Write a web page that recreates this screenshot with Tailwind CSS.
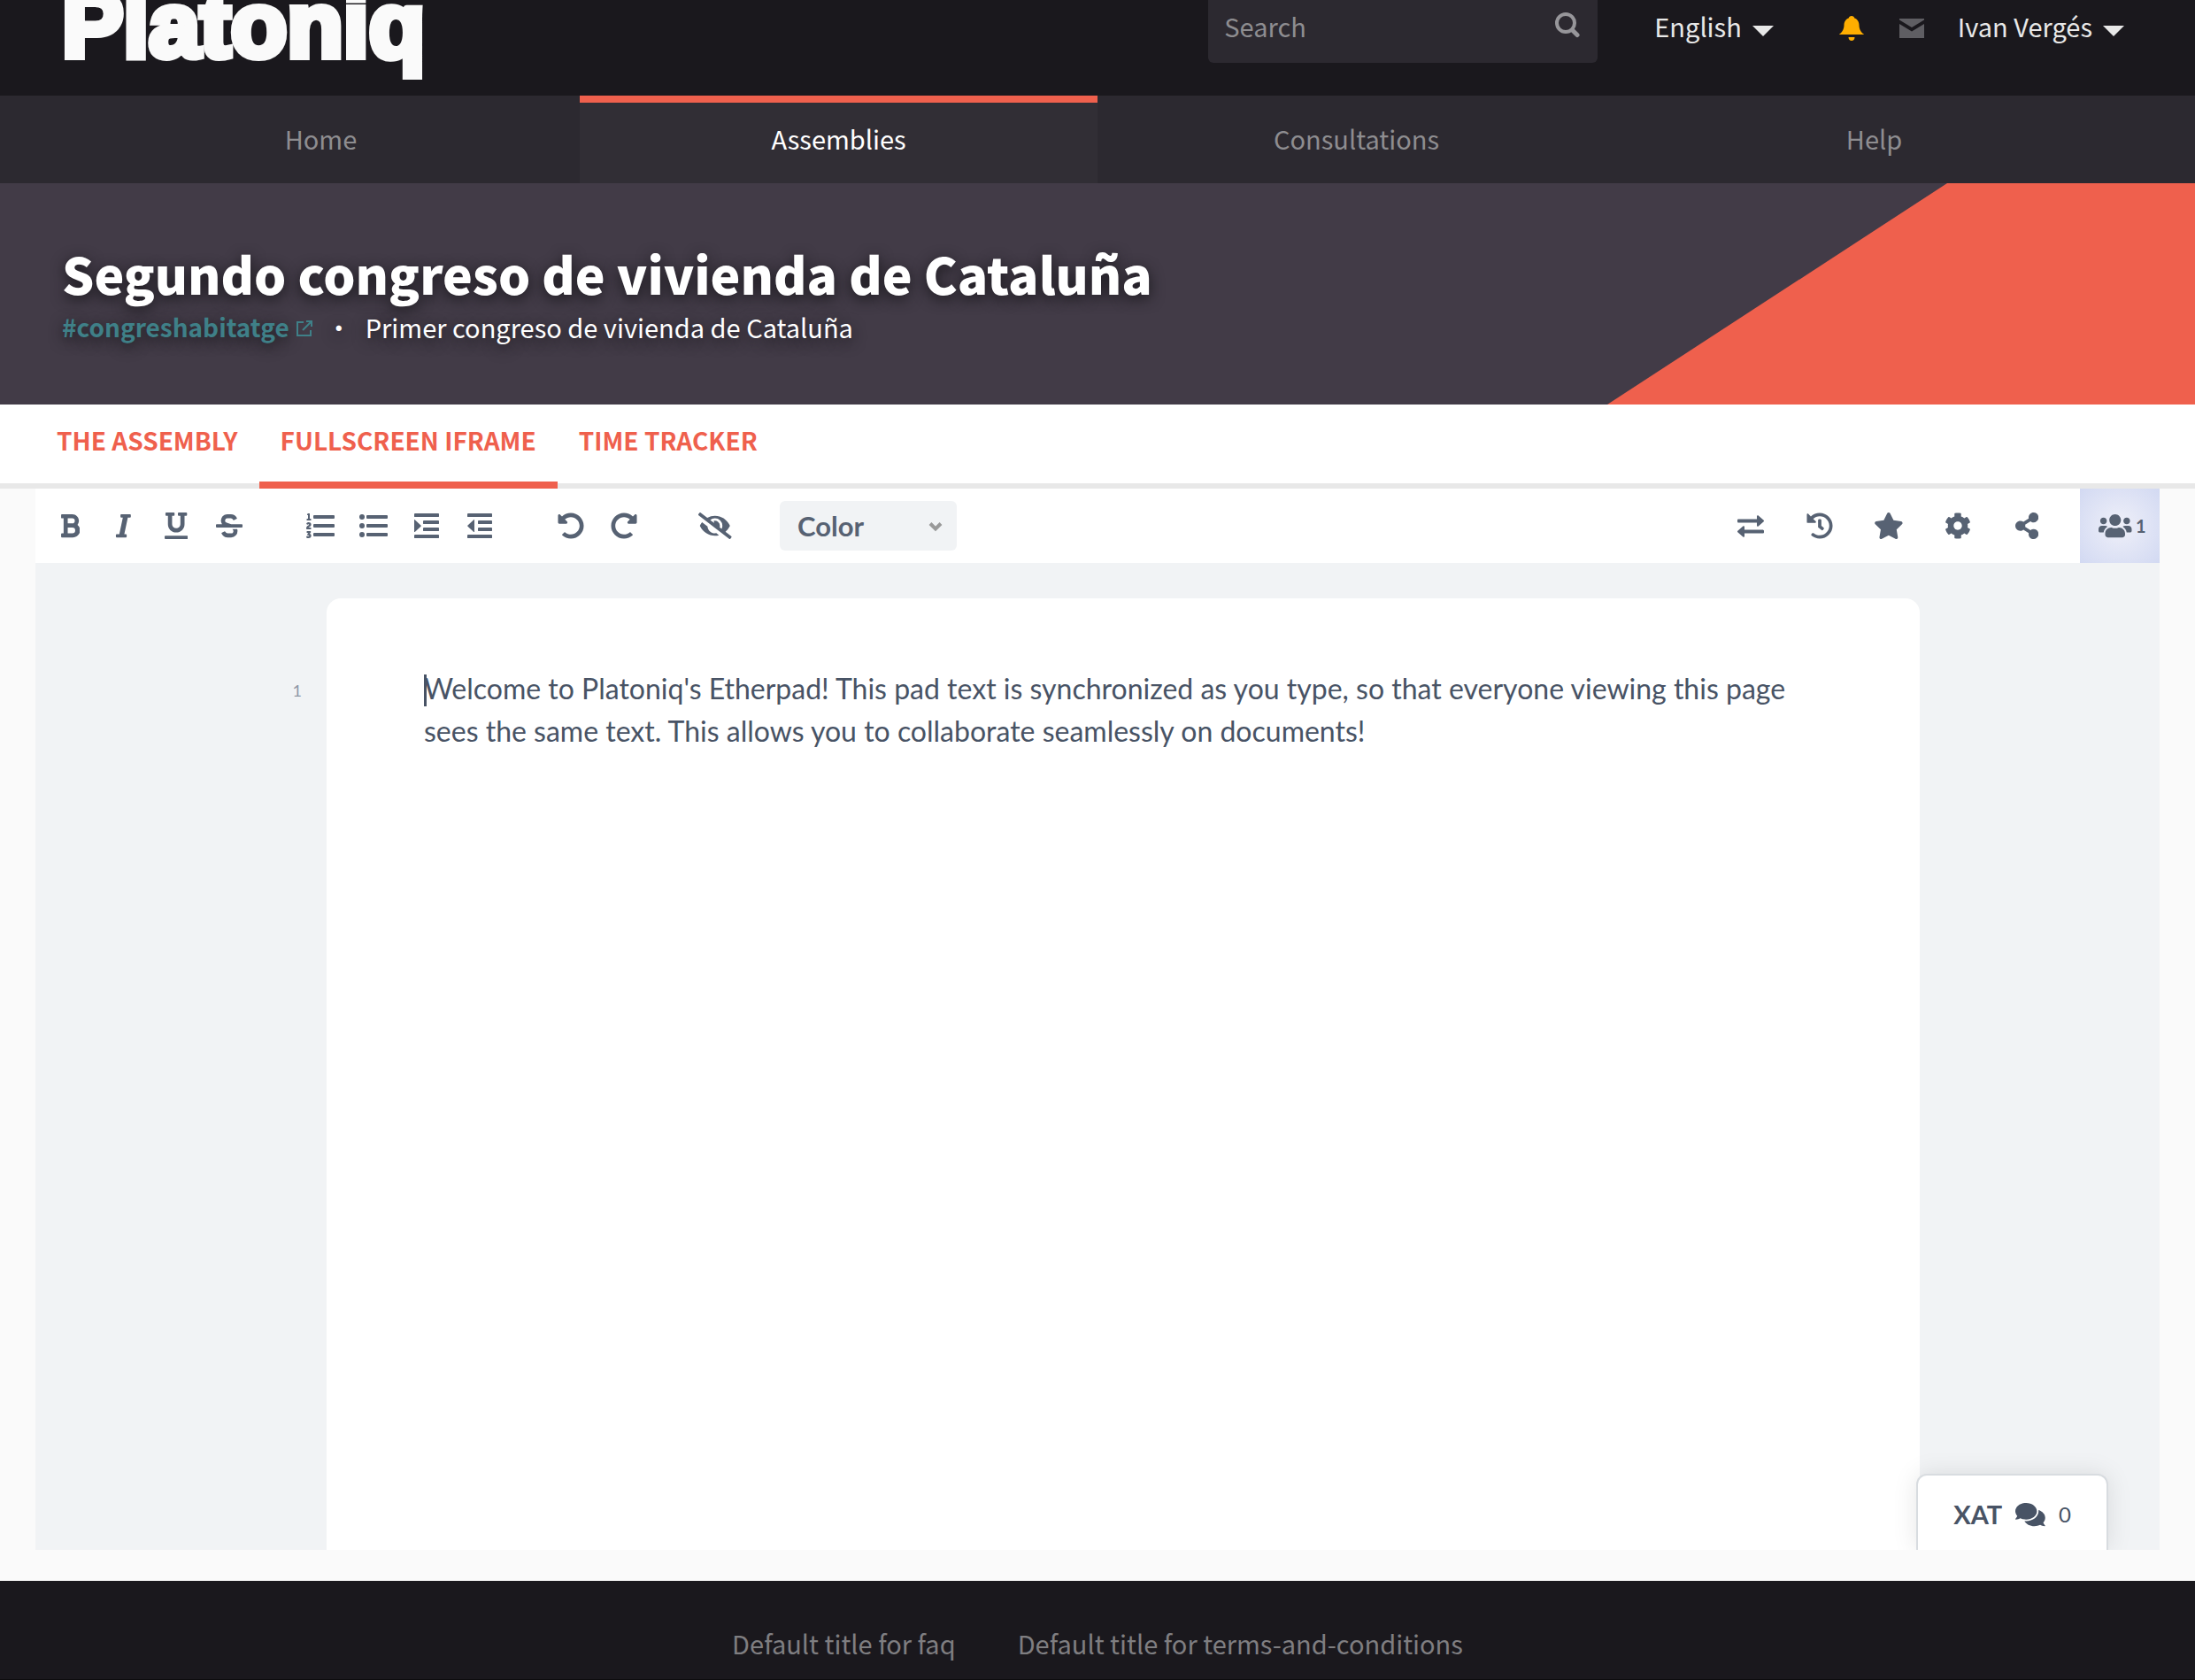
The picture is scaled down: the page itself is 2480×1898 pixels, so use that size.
<!DOCTYPE html>
<html lang="en">
<head>
<meta charset="utf-8">
<meta name="viewport" content="width=device-width, initial-scale=1">
<title>Segundo congreso de vivienda de Cataluña</title>
<script src="https://cdn.jsdelivr.net/npm/@tailwindcss/browser@4"></script>
</head>
<body class="flex min-h-screen flex-col bg-[#fafafa] font-['Noto_Sans_CJK_SC',sans-serif] text-[29px] leading-12">

<header class="flex h-[108px] items-start justify-between overflow-hidden bg-[#1a181d] pr-20 pl-[70px]">
  <a href="#" class="-mt-6 font-['Liberation_Sans',sans-serif] text-[104px] leading-none font-bold text-[#fafafa] [-webkit-text-stroke:8px_#fafafa]">Platoniq</a>
  <div class="flex h-[71px] items-center text-[#e8e8e8]">
    <form class="flex h-full w-[440px] items-center rounded-b-md bg-[#2c2930] px-[18px] pb-3.5">
      <input type="search" aria-label="Search" placeholder="Search" class="h-12 min-w-0 flex-1 bg-transparent outline-none placeholder:text-[#8e8d90]">
      <button type="button" aria-label="Submit search" class="text-[#97969a]">
        <svg class="size-8" viewBox="0 0 32 32" fill="none" stroke="currentColor"><circle cx="14" cy="13" r="10" stroke-width="4"/><path d="M21.500 21l5.500 5.500" stroke-width="5" stroke-linecap="round"/></svg>
      </button>
    </form>
    <button type="button" class="ml-16 flex items-center gap-3 pb-3.5">English
      <svg class="mt-3 h-3 w-6" viewBox="0 0 24 12" fill="currentColor"><path d="M0 0h24L12 12z"/></svg>
    </button>
    <a href="#" aria-label="Notifications" class="ml-[74px] pb-2 text-[#ffae00]">
      <svg class="size-7" viewBox="0 0 28 28" fill="currentColor"><path d="M14 0c-1.800 0-3 1.200-3.300 2.600C7 4 5.600 7 5.500 10.500 5.300 16 3 18.500 0 20.800V21h28v-.200C25 18.500 22.700 16 22.500 10.500 22.400 7 21 4 17.300 2.600 17 1.200 15.800 0 14 0zM10.500 24h7c0 2.400-1.500 4-3.500 4s-3.500-1.600-3.500-4z"/></svg>
    </a>
    <a href="#" aria-label="Conversations" class="ml-10 pb-2 text-[#5f5e63]">
      <svg class="h-[22px] w-7" viewBox="0 0 28 22" fill="currentColor"><path d="M0 0h28v1.500L14 10 0 1.500zM0 6l14 8.500L28 6v16H0z"/></svg>
    </a>
    <button type="button" class="ml-[38px] flex items-center gap-3 pb-3.5">Ivan Vergés
      <svg class="mt-3 h-3 w-6" viewBox="0 0 24 12" fill="currentColor"><path d="M0 0h24L12 12z"/></svg>
    </button>
  </div>
</header>

<nav aria-label="Main" class="grid h-[99px] grid-cols-4 bg-[#2c2930] px-[70px] text-[#8e8d90]">
  <a href="#" class="flex items-center justify-center pb-1">Home</a>
  <a href="#" aria-current="page" class="flex items-center justify-center border-t-8 border-[#ef604d] bg-[#312e35] pb-3 text-white">Assemblies</a>
  <a href="#" class="flex items-center justify-center pb-1">Consultations</a>
  <a href="#" class="flex items-center justify-center pb-1">Help</a>
</nav>

<section class="relative bg-[#423b47] px-[70px] py-16 text-white">
  <div class="absolute inset-y-0 right-0 w-[664px] bg-[#ef604d] [clip-path:polygon(384px_0,100%_0,100%_100%,0_100%)]"></div>
  <h1 class="relative text-[57px] leading-[74px] font-black [text-shadow:0_4px_16px_#1a181d]">Segundo congreso de vivienda de Cataluña</h1>
  <p class="relative flex items-center [text-shadow:0_4px_16px_#1a181d]">
    <a href="#" class="flex items-center gap-2 text-[28px] font-bold text-[#3f8088]">#congreshabitatge
      <svg class="mt-1 size-[18px]" viewBox="0 0 18 18" fill="none" stroke="currentColor" stroke-width="2"><path d="M8 2H1v15h15v-6M7 11l9-9M11 1h6v6"/></svg>
    </a>
    <span class="w-15 text-center">·</span>
    <span>Primer congreso de vivienda de Cataluña</span>
  </p>
</section>

<nav aria-label="Assembly" class="flex h-[95px] border-b-6 border-[#e8e8e8] bg-white px-10 text-[28px] font-bold text-[#ef604d] uppercase">
  <a href="#" class="flex h-[95px] items-center px-6 pb-4">The assembly</a>
  <a href="#" aria-current="page" class="flex h-[95px] items-center border-b-8 border-[#ef604d] px-6 pb-2">Fullscreen iframe</a>
  <a href="#" class="flex h-[95px] items-center px-6 pb-4">Time tracker</a>
</nav>

<main class="flex flex-1 flex-col px-10 pb-[35px] font-['Lato',sans-serif] text-[#485365]">
  <section class="relative flex flex-1 flex-col overflow-hidden bg-[#f1f3f5]">
    <div role="toolbar" aria-label="Editor" class="flex h-[84px] items-center justify-between bg-white pl-[9px] text-[#576273]">
      <div class="flex items-center gap-[43px]">
        <div class="flex">
          <button type="button" aria-label="Bold" class="flex w-15 justify-center"><svg class="h-[30px]" viewBox="0 0 384 512" fill="currentColor"><path d="M333.490 238a122 122 0 0 0 27-65.210C367.870 96.490 308 32 233.420 32H34a16 16 0 0 0-16 16v48a16 16 0 0 0 16 16h31.870v288H34a16 16 0 0 0-16 16v48a16 16 0 0 0 16 16h209.320c70.800 0 134.140-51.750 141-122.400 4.740-48.450-16.390-92.060-50.830-119.600zM145.660 112h87.760a48 48 0 0 1 0 96h-87.760zm87.760 288h-87.760V288h87.760a56 56 0 0 1 0 112z"/></svg></button>
          <button type="button" aria-label="Italic" class="flex w-15 justify-center"><svg class="h-[30px]" viewBox="0 0 320 512" fill="currentColor"><path d="M304 48v32a16 16 0 0 1-16 16h-42l-68 320h30a16 16 0 0 1 16 16v32a16 16 0 0 1-16 16H32a16 16 0 0 1-16-16v-32a16 16 0 0 1 16-16h50l68-320h-30a16 16 0 0 1-16-16V48a16 16 0 0 1 16-16h168a16 16 0 0 1 16 16z"/></svg></button>
          <button type="button" aria-label="Underline" class="flex w-15 justify-center"><svg class="h-[30px]" viewBox="0 0 448 512" fill="currentColor"><path d="M32 64h32v160c0 88.220 71.780 160 160 160s160-71.780 160-160V64h32a16 16 0 0 0 16-16V16a16 16 0 0 0-16-16H272a16 16 0 0 0-16 16v32a16 16 0 0 0 16 16h32v160a80 80 0 0 1-160 0V64h32a16 16 0 0 0 16-16V16a16 16 0 0 0-16-16H32a16 16 0 0 0-16 16v32a16 16 0 0 0 16 16zm400 384H16a16 16 0 0 0-16 16v32a16 16 0 0 0 16 16h416a16 16 0 0 0 16-16v-32a16 16 0 0 0-16-16z"/></svg></button>
          <button type="button" aria-label="Strikethrough" class="flex w-15 justify-center"><svg class="h-[30px]" viewBox="0 0 512 512" fill="currentColor"><path d="M496 224H293.900l-87.170-26.830A43.550 43.550 0 0 1 219.550 112h66.790A49.890 49.890 0 0 1 331 139.580a16 16 0 0 0 21.460 7.150l42.940-21.470a16 16 0 0 0 7.160-21.460l-.53-1A128 128 0 0 0 287.510 32h-68a123.680 123.680 0 0 0-123 135.640c2 20.890 10.100 39.830 21.780 56.360H16a16 16 0 0 0-16 16v32a16 16 0 0 0 16 16h480a16 16 0 0 0 16-16v-32a16 16 0 0 0-16-16zm-180.240 96A43 43 0 0 1 336 356.450 43.590 43.590 0 0 1 292.450 400h-66.790A49.890 49.890 0 0 1 181 372.420a16 16 0 0 0-21.460-7.150l-42.940 21.470a16 16 0 0 0-7.160 21.460l.53 1A128 128 0 0 0 224.490 480h68a123.680 123.680 0 0 0 123-135.640 114.250 114.250 0 0 0-5.340-24.360z"/></svg></button>
        </div>
        <div class="flex">
          <button type="button" aria-label="Ordered list" class="flex w-15 justify-center"><svg class="h-8" viewBox="0 0 512 512" fill="currentColor"><path d="M61.770 401l17.500-20.150a19.920 19.920 0 0 0 5.070-14.190v-3.310C84.340 356 80.500 352 73 352H16a8 8 0 0 0-8 8v16a8 8 0 0 0 8 8h22.830a157.410 157.410 0 0 0-11 12.310l-5.610 7c-4 5.070-5.250 10.130-2.800 14.880l1.050 1.930c3 5.760 6.290 7.880 12.250 7.880h4.730c10.330 0 15.940 2.440 15.940 9.090 0 4.720-4.200 8.220-14.360 8.220a41.540 41.540 0 0 1-15.470-3.120c-6.490-3.880-11.740-3.500-15.600 3.120l-5.590 9.310c-3.720 6.130-3.190 11.720 2.630 15.940 7.710 4.690 20.380 9.440 37 9.440 34.160 0 48.500-22.750 48.500-44.120-.03-14.380-9.120-29.760-28.730-34.880zM496 224H144a16 16 0 0 0-16 16v32a16 16 0 0 0 16 16h352a16 16 0 0 0 16-16v-32a16 16 0 0 0-16-16zm0-160H144a16 16 0 0 0-16 16v32a16 16 0 0 0 16 16h352a16 16 0 0 0 16-16V80a16 16 0 0 0-16-16zm0 320H144a16 16 0 0 0-16 16v32a16 16 0 0 0 16 16h352a16 16 0 0 0 16-16v-32a16 16 0 0 0-16-16zM16 160h64a8 8 0 0 0 8-8v-16a8 8 0 0 0-8-8H64V40a8 8 0 0 0-8-8H32a8 8 0 0 0-7.140 4.420l-8 16A8 8 0 0 0 24 64h8v64H16a8 8 0 0 0-8 8v16a8 8 0 0 0 8 8zm-3.910 160H80a8 8 0 0 0 8-8v-16a8 8 0 0 0-8-8H41.320c3.290-10.290 48.340-18.680 48.340-56.440 0-29.060-25-39.560-44.470-39.560-21.360 0-33.800 10-40.460 18.750-4.370 5.590-3 10.840 2.800 15.370l8.580 6.880c5.610 4.560 11 2.470 16.120-2.440a13.440 13.440 0 0 1 9.460-3.840c3.330 0 9.280 1.560 9.280 8.750C51 248.190 0 257.310 0 304.590v4C0 316 5.080 320 12.090 320z"/></svg></button>
          <button type="button" aria-label="Unordered list" class="flex w-15 justify-center"><svg class="h-8" viewBox="0 0 512 512" fill="currentColor"><circle cx="48" cy="96" r="48"/><circle cx="48" cy="256" r="48"/><circle cx="48" cy="416" r="48"/><rect x="128" y="64" width="384" height="64" rx="16"/><rect x="128" y="224" width="384" height="64" rx="16"/><rect x="128" y="384" width="384" height="64" rx="16"/></svg></button>
          <button type="button" aria-label="Indent" class="flex w-15 justify-center"><svg class="h-8" viewBox="0 0 448 512" fill="currentColor"><path d="M0 152c0-10 6-12 12-6l108 100q10 10 0 20L12 366c-6 6-12 4-12-6z"/><rect y="32" width="448" height="64" rx="14"/><rect x="160" y="160" width="288" height="64" rx="14"/><rect x="160" y="288" width="288" height="64" rx="14"/><rect y="416" width="448" height="64" rx="14"/></svg></button>
          <button type="button" aria-label="Outdent" class="flex w-15 justify-center"><svg class="h-8" viewBox="0 0 448 512" fill="currentColor"><path d="M128 152c0-10-6-12-12-6L8 246q-10 10 0 20l108 100c6 6 12 4 12-6z"/><rect y="32" width="448" height="64" rx="14"/><rect x="192" y="160" width="256" height="64" rx="14"/><rect x="192" y="288" width="256" height="64" rx="14"/><rect y="416" width="448" height="64" rx="14"/></svg></button>
        </div>
        <div class="flex">
          <button type="button" aria-label="Undo" class="flex w-15 justify-center"><svg class="h-[30px]" viewBox="0 0 512 512" fill="currentColor"><path d="M255.545 8c-66.269.119-126.438 26.233-170.860 68.685L48.971 40.971C33.851 25.851 8 36.559 8 57.941V192c0 13.255 10.745 24 24 24h134.059c21.382 0 32.090-25.851 16.971-40.971l-41.750-41.750c30.864-28.899 70.801-44.907 113.230-45.273 92.398-.798 170.283 73.977 169.484 169.442C423.236 348.009 349.816 424 256 424c-41.127 0-79.997-14.678-110.630-41.556-4.743-4.161-11.906-3.908-16.368.553L89.340 422.659c-4.872 4.872-4.631 12.815.482 17.433C133.798 479.813 192.074 504 256 504c136.966 0 247.999-111.033 248-247.998C504.001 119.193 392.354 7.755 255.545 8z"/></svg></button>
          <button type="button" aria-label="Redo" class="flex w-15 justify-center"><svg class="h-[30px]" viewBox="0 0 512 512" fill="currentColor"><path transform="matrix(-1 0 0 1 512 0)" d="M255.545 8c-66.269.119-126.438 26.233-170.860 68.685L48.971 40.971C33.851 25.851 8 36.559 8 57.941V192c0 13.255 10.745 24 24 24h134.059c21.382 0 32.090-25.851 16.971-40.971l-41.750-41.750c30.864-28.899 70.801-44.907 113.230-45.273 92.398-.798 170.283 73.977 169.484 169.442C423.236 348.009 349.816 424 256 424c-41.127 0-79.997-14.678-110.630-41.556-4.743-4.161-11.906-3.908-16.368.553L89.340 422.659c-4.872 4.872-4.631 12.815.482 17.433C133.798 479.813 192.074 504 256 504c136.966 0 247.999-111.033 248-247.998C504.001 119.193 392.354 7.755 255.545 8z"/></svg></button>
        </div>
        <button type="button" aria-label="Clear authorship colors" class="flex w-15 justify-center"><svg class="h-[30px]" viewBox="0 0 640 512" fill="currentColor"><path d="M320 400c-75.850 0-137.250-58.710-142.900-133.110L72.200 185.820c-13.790 17.300-26.480 35.590-36.720 55.590a32.350 32.350 0 0 0 0 29.190C89.710 376.410 197.070 448 320 448c26.910 0 52.870-4 77.890-10.460L346 397.390a144.130 144.130 0 0 1-26 2.610zm313.820 58.100l-110.550-85.440a331.250 331.250 0 0 0 81.250-102.070 32.350 32.350 0 0 0 0-29.190C550.290 135.590 442.930 64 320 64a308.150 308.150 0 0 0-147.320 37.700L45.460 3.370A16 16 0 0 0 23 6.180L3.370 31.450A16 16 0 0 0 6.180 53.900l588.360 454.730a16 16 0 0 0 22.460-2.810l19.640-25.270a16 16 0 0 0-2.820-22.450zm-183.720-142l-39.300-30.380A94.750 94.750 0 0 0 416 256a94.760 94.760 0 0 0-121.310-92.210A47.650 47.650 0 0 1 304 192a46.640 46.640 0 0 1-1.540 10l-73.610-56.890A142.310 142.310 0 0 1 320 112a143.920 143.920 0 0 1 144 144c0 21.630-5.290 41.790-13.900 60.110z"/></svg></button>
        <div class="relative">
          <select aria-label="Color" class="h-14 w-[200px] appearance-none rounded-md bg-[#f1f3f5] px-5 text-[31px] leading-12 font-bold"><option>Color</option></select>
          <svg class="pointer-events-none absolute top-[23px] right-4 h-3 w-4" viewBox="0 0 16 12" fill="none" stroke="#999" stroke-width="4"><path d="M2 2.500l6 6 6-6"/></svg>
        </div>
      </div>
      <div class="flex h-full items-center">
        <button type="button" aria-label="Import/Export" class="flex w-[78px] justify-center"><svg class="size-8" viewBox="0 0 32 32" fill="currentColor"><path d="M2 8.500h21V5.300c0-1 1-1.500 1.700-.8l6 5.200q.7.800 0 1.600l-6 5.200c-.7.700-1.700.2-1.700-.8v-3.200H2q-1 0-1-1V9.500q0-1 1-1zM30 20.500H9v-3.200c0-1-1-1.500-1.700-.8l-6 5.200q-.7.800 0 1.600l6 5.200c.7.700 1.700.2 1.700-.8v-3.200h21q1 0 1-1v-1.800q0-1-1-1z"/></svg></button>
        <button type="button" aria-label="Timeslider" class="flex w-[78px] justify-center"><svg class="h-[30px]" viewBox="0 0 512 512" fill="currentColor"><path d="M504 255.531c.253 136.640-111.180 248.372-247.820 248.468-59.015.042-113.223-20.530-155.822-54.911-11.077-8.940-11.905-25.541-1.839-35.607l11.267-11.267c8.609-8.609 22.353-9.551 31.891-1.984C173.062 425.135 212.781 440 256 440c101.705 0 184-82.311 184-184 0-101.705-82.311-184-184-184-48.814 0-93.149 18.969-126.068 49.932l50.754 50.754c10.080 10.080 2.941 27.314-11.313 27.314H24c-8.837 0-16-7.163-16-16V38.627c0-14.254 17.234-21.393 27.314-11.314l49.372 49.372C129.209 34.136 189.552 8 256 8c136.810 0 247.747 110.780 248 247.531zm-180.912 78.784l9.823-12.630c8.138-10.463 6.253-25.542-4.210-33.679L288 256.349V152c0-13.255-10.745-24-24-24h-16c-13.255 0-24 10.745-24 24v135.651l65.409 50.874c10.463 8.137 25.541 6.253 33.679-4.210z"/></svg></button>
        <button type="button" aria-label="Saved revision" class="flex w-[78px] justify-center"><svg class="h-[30px]" viewBox="0 0 576 512" fill="currentColor"><path d="M259.300 17.800L194 150.200 47.900 171.500c-26.200 3.800-36.700 36.100-17.700 54.600l105.700 103-25 145.500c-4.500 26.300 23.200 46 46.400 33.700L288 439.600l130.700 68.700c23.200 12.200 50.900-7.400 46.400-33.700l-25-145.500 105.700-103c19-18.500 8.500-50.800-17.700-54.600L382 150.200 316.700 17.800c-11.700-23.600-45.600-23.900-57.400 0z"/></svg></button>
        <button type="button" aria-label="Settings" class="flex w-[78px] justify-center"><svg class="h-[30px]" viewBox="0 0 512 512" fill="currentColor"><path d="M487.400 315.700l-42.600-24.600c4.300-23.200 4.300-47 0-70.200l42.600-24.600c4.900-2.800 7.100-8.600 5.500-14-11.100-35.600-30-67.800-54.700-94.600-3.800-4.100-10-5.100-14.800-2.300L380.800 110c-17.900-15.400-38.500-27.300-60.800-35.100V25.800c0-5.600-3.900-10.500-9.400-11.700-36.700-8.200-74.300-7.800-109.200 0-5.500 1.200-9.400 6.100-9.400 11.700V75c-22.200 7.900-42.800 19.800-60.800 35.100L88.700 85.500c-4.900-2.800-11-1.900-14.800 2.300-24.700 26.700-43.600 58.900-54.700 94.600-1.700 5.400.6 11.200 5.500 14L67.300 221c-4.300 23.200-4.300 47 0 70.200l-42.600 24.600c-4.900 2.800-7.100 8.600-5.500 14 11.100 35.600 30 67.800 54.700 94.600 3.800 4.100 10 5.100 14.800 2.300l42.600-24.600c17.900 15.400 38.500 27.300 60.800 35.100v49.200c0 5.600 3.900 10.500 9.400 11.700 36.700 8.200 74.300 7.800 109.200 0 5.500-1.200 9.400-6.100 9.400-11.700v-49.200c22.200-7.900 42.800-19.800 60.800-35.100l42.600 24.600c4.900 2.800 11 1.900 14.800-2.300 24.700-26.700 43.600-58.900 54.700-94.600 1.500-5.500-.7-11.300-5.600-14.100zM256 336c-44.100 0-80-35.900-80-80s35.900-80 80-80 80 35.900 80 80-35.900 80-80 80z"/></svg></button>
        <button type="button" aria-label="Share" class="flex w-[78px] justify-center"><svg class="h-[30px]" viewBox="0 0 448 512" fill="currentColor"><path d="M352 320c-22.608 0-43.387 7.819-59.790 20.895l-102.486-64.054a96.551 96.551 0 0 0 0-41.683l102.486-64.054C308.613 184.181 329.392 192 352 192c53.019 0 96-42.981 96-96S405.019 0 352 0s-96 42.981-96 96c0 7.158.79 14.130 2.276 20.841L155.790 180.895C139.387 167.819 118.608 160 96 160c-53.019 0-96 42.981-96 96s42.981 96 96 96c22.608 0 43.387-7.819 59.790-20.895l102.486 64.054A96.301 96.301 0 0 0 256 416c0 53.019 42.981 96 96 96s96-42.981 96-96-42.981-96-96-96z"/></svg></button>
        <button type="button" aria-label="Show users" class="ml-[21px] flex h-full w-[90px] items-center justify-center gap-1 bg-[radial-gradient(circle,#eff0f9,#d2d9f2)] pl-1.5 text-xl font-bold"><svg class="h-[30px]" viewBox="0 0 640 512" fill="currentColor"><path d="M96 224c35.300 0 64-28.700 64-64s-28.700-64-64-64-64 28.700-64 64 28.700 64 64 64zm448 0c35.300 0 64-28.700 64-64s-28.700-64-64-64-64 28.700-64 64 28.700 64 64 64zm32 32h-64c-17.600 0-33.500 7.100-45.100 18.600 40.300 22.100 68.900 62 75.100 109.400h66c17.700 0 32-14.300 32-32v-32c0-35.300-28.700-64-64-64zm-256 0c61.900 0 112-50.100 112-112S381.900 32 320 32 208 82.100 208 144s50.100 112 112 112zm76.800 32h-8.300c-20.800 10-43.900 16-68.500 16s-47.600-6-68.500-16h-8.300C179.600 288 128 339.600 128 403.200V432c0 26.500 21.500 48 48 48h288c26.500 0 48-21.500 48-48v-28.800c0-63.600-51.600-115.200-115.200-115.200zm-223.700-13.400C161.500 263.100 145.600 256 128 256H64c-35.300 0-64 28.700-64 64v32c0 17.700 14.300 32 32 32h65.900c6.300-47.400 34.900-87.300 75.200-109.400z"/></svg>1</button>
      </div>
    </div>

    <div class="flex flex-1 justify-center pt-10">
      <div class="w-[58px] pt-20 pr-7 text-right text-lg leading-12 text-[#8f98a6]">1</div>
      <div class="w-3/4 rounded-t-2xl bg-white px-[110px] pt-[78px]">
        <p class="relative text-[32px] leading-12"><span class="absolute top-2 left-0 h-9 w-[3px] bg-[#485365]"></span>Welcome to Platoniq's Etherpad! This pad text is synchronized as you type, so that everyone viewing this page sees the same text. This allows you to collaborate seamlessly on documents!</p>
      </div>
    </div>

    <button type="button" class="absolute right-[58px] bottom-0 flex h-[86px] w-[217px] items-center justify-center gap-[15px] rounded-t-xl border-2 border-b-0 border-[#d8dce0] bg-white pt-1 shadow-[0_0_28px_rgba(0,0,0,0.1)]">
      <span class="text-[29px] font-bold">XAT</span>
      <svg class="h-[30px]" viewBox="0 0 576 512" fill="currentColor"><path d="M416 192c0-88.400-93.100-160-208-160S0 103.600 0 192c0 34.300 14.100 65.900 38 92-13.400 30.200-35.500 54.200-35.800 54.500-2.200 2.300-2.800 5.700-1.500 8.700S4.800 352 8 352c36.600 0 66.900-12.300 88.700-25 32.200 15.700 70.300 25 111.300 25 114.900 0 208-71.600 208-160zm122 220c23.900-26 38-57.700 38-92 0-66.900-53.500-124.200-129.300-148.100.9 6.600 1.300 13.300 1.300 20.100 0 105.900-107.700 192-240 192-10.800 0-21.300-.8-31.700-1.900C207.800 439.600 281.800 480 368 480c41 0 79.100-9.200 111.300-25 21.800 12.700 52.100 25 88.700 25 3.200 0 6.100-1.900 7.300-4.800 1.300-2.900.7-6.300-1.500-8.700-.3-.3-22.400-24.200-35.800-54.500z"/></svg>
      <span class="text-2xl">0</span>
    </button>
  </section>
</main>

<footer class="flex h-28 justify-center gap-[70px] border-b border-[#0d0c0e] bg-[#1a181d] pt-[46px] text-[#7f7e81]">
  <a href="#">Default title for faq</a>
  <a href="#">Default title for terms-and-conditions</a>
</footer>
</body>
</html>
